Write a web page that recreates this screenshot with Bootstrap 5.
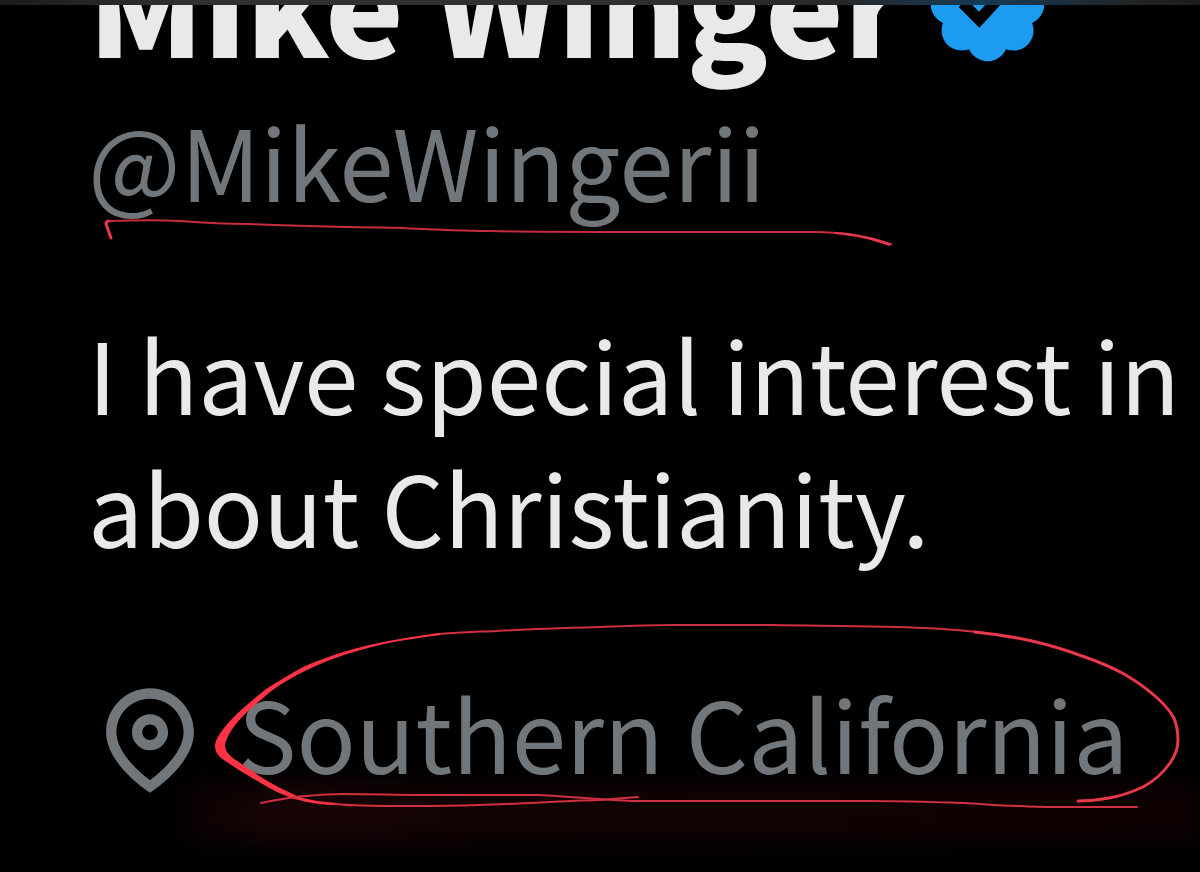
<!DOCTYPE html>
<html lang="en" data-bs-theme="dark">
<head>
<meta charset="utf-8">
<meta name="viewport" content="width=device-width, initial-scale=1">
<title>Mike Winger</title>
<link rel="stylesheet" href="https://cdn.jsdelivr.net/npm/bootstrap@5.3.0/dist/css/bootstrap.min.css">
<style>
  body { background: #000; color: #e7e9ea; font-family: "Noto Sans CJK JP", "Noto Sans", sans-serif; font-size: 98px; line-height: 133px; }
  .top-strip { height: 5px; background: linear-gradient(90deg, #1a1b1b 0, #2f3031 15%, #2f3031 50%, #262829 70%, #163a55 82%, #222424 95%, #1b1c1c 100%); }
  .profile { padding: 0 0 74px 88px; }
  .name-row { margin-top: -74px; }
  .display-name { color: inherit; font-size: 132px; line-height: 140px; font-weight: 900; }
  .badge-icon { width: 133px; height: 133px; margin: 7px 0 0 16px; fill: #1d9bf0; }
  .muted-text { color: #71767b; }
  .handle { margin-top: 22px; }
  .bio { margin: 80px 0 93px; }
  .pin { width: 124px; height: 124px; margin-top: 13px; fill: #71767b; }
  .place { margin-left: 26px; }
  .ink { left: 0; top: 0; overflow: visible; pointer-events: none; fill: none; stroke: #e8384b; stroke-linecap: round; stroke-linejoin: round; }
  .glow { left: 96px; right: 0; top: 118px; height: 60px; background: linear-gradient(90deg, #0a0102, #180406 10%, #120203 30%, #0e0102); filter: blur(12px); }
</style>
<script src="https://cdn.jsdelivr.net/npm/bootstrap@5.3.0/dist/js/bootstrap.bundle.min.js"></script>
</head>
<body>
<div class="top-strip"></div>
<main class="profile overflow-hidden text-nowrap">
  <div class="name-row d-flex align-items-start">
    <h1 class="display-name mb-0">Mike Winger</h1>
    <svg class="badge-icon flex-shrink-0" viewBox="0 0 22 22" role="img" aria-label="Verified account"><path d="M20.396 11c-.018-.646-.215-1.275-.57-1.816-.354-.54-.852-.972-1.438-1.246.223-.607.27-1.264.14-1.897-.131-.634-.437-1.218-.882-1.687-.47-.445-1.053-.75-1.687-.882-.633-.13-1.29-.083-1.897.14-.273-.587-.704-1.086-1.245-1.44S11.647 1.62 11 1.604c-.646.017-1.273.213-1.813.568s-.969.854-1.24 1.44c-.608-.223-1.267-.272-1.902-.14-.635.13-1.22.436-1.69.882-.445.47-.749 1.055-.878 1.688-.13.633-.08 1.29.144 1.896-.587.274-1.087.705-1.443 1.245-.356.54-.555 1.17-.574 1.817.02.647.218 1.276.574 1.817.356.54.856.972 1.443 1.245-.224.606-.274 1.263-.144 1.896.13.634.433 1.218.877 1.688.47.443 1.054.747 1.687.878.633.132 1.29.084 1.897-.136.274.586.705 1.084 1.246 1.439.54.354 1.17.551 1.816.569.647-.016 1.276-.213 1.817-.567s.972-.854 1.245-1.44c.604.239 1.266.296 1.903.164.636-.132 1.22-.447 1.68-.907.46-.46.776-1.044.908-1.681s.075-1.299-.165-1.903c.586-.274 1.084-.705 1.439-1.246.354-.54.551-1.17.569-1.816zM9.662 14.85l-3.429-3.428 1.293-1.302 2.072 2.072 4.4-4.794 1.347 1.246z"/></svg>
  </div>

  <div class="handle position-relative muted-text">@MikeWingerii
    <!-- pen stroke under the handle -->
    <svg class="ink position-absolute" width="830" height="160" viewBox="88 93 830 160" aria-hidden="true">
      <path stroke-width="3" d="M111 238L106 224Q106 221 109 221"/>
      <path stroke-width="2" stroke="#c62c3b" d="M109 221C140 220 160 220 180 221C205 223 225 224 249 224C300 226 350 227 402 228C440 230 465 231 490 231C530 232 565 232 600 232L814 232C828 232 840 233 852 235"/>
      <path fill="#e8384b" stroke="none" d="M835 232C858 233 876 238 893 244L889 246C873 240 857 236 835 234Z"/>
    </svg>
  </div>

  <p class="bio">I have special interest in<br>about Christianity.</p>

  <div class="position-relative d-flex align-items-start muted-text">
    <div class="glow position-absolute"></div>
    <svg class="pin position-relative flex-shrink-0" viewBox="0 0 24 24" aria-hidden="true"><path d="M12 7c-1.93 0-3.5 1.57-3.5 3.5S10.07 14 12 14s3.5-1.57 3.5-3.5S13.93 7 12 7zm0 5c-.827 0-1.5-.673-1.5-1.5S11.173 9 12 9s1.5.673 1.5 1.5S12.827 12 12 12zm0-10c-4.687 0-8.5 3.813-8.5 8.5 0 5.967 7.621 11.116 7.945 11.332l.555.37.555-.37c.324-.216 7.945-5.365 7.945-11.332C20.5 5.813 16.687 2 12 2zm0 17.77c-1.665-1.241-6.5-5.196-6.5-9.27C5.5 6.916 8.416 4 12 4s6.5 2.916 6.5 6.5c0 4.073-4.835 8.028-6.5 9.27z"/></svg>
    <span class="place position-relative">Southern California</span>
    <!-- pen loop and underline round the location -->
    <svg class="ink position-absolute" width="1100" height="160" viewBox="88 665 1100 160" aria-hidden="true">
      <path stroke-width="2" stroke="#d03040" d="M432 635C455 632 475 632 497 631C530 629 565 628 600 627C625 626 650 625 676 625L772 625C830 626 880 626 925 628C945 629 965 630 983 633"/>
      <path stroke-width="3" d="M975 632C995 634 1014 637 1032 641C1049 645 1066 650 1082 656C1097 661 1111 667 1124 674C1136 681 1146 688 1155 696C1163 703 1170 711 1174 718C1177 726 1178 733 1178 740C1178 749 1175 756 1170 763C1163 773 1154 781 1143 787C1132 792 1121 796 1109 798C1099 800 1088 801 1078 801"/>
      <path fill="#ff3344" stroke="none" d="M440 633C424 635 409 637 394 640C376 643 360 647 343 652C330 656 317 661 305 666C291 673 279 681 266 689C250 702 235 714 224 728C218 736 215 741 215 746C215 752 219 757 224 760C235 768 247 775 259 782C270 789 283 795 295 799C309 803 323 805 337 805L337 803C322 802 309 800 297 796C286 791 274 785 264 779C254 772 243 765 233 758C228 754 225 750 225 745C226 739 229 734 233 728C242 715 256 704 270 692C282 683 294 676 307 670C319 664 332 659 344 655C360 650 378 645 394 642C410 639 425 637 440 635Z"/>
      <path stroke-width="2" stroke="#cf3042" d="M335 804C357 806 380 806 402 806C428 806 453 806 478 805C519 804 560 801 600 800L638 797"/>
      <path stroke-width="2" stroke="#cf3042" d="M261 803C276 800 291 797 306 796C318 795 331 794 344 794C370 794 396 795 421 795L536 795C560 796 580 798 600 799C613 800 625 801 638 801L868 801C900 801 934 802 964 803C983 804 1002 806 1021 806C1034 807 1047 807 1059 807L1137 807"/>
    </svg>
  </div>
</main>
</body>
</html>
